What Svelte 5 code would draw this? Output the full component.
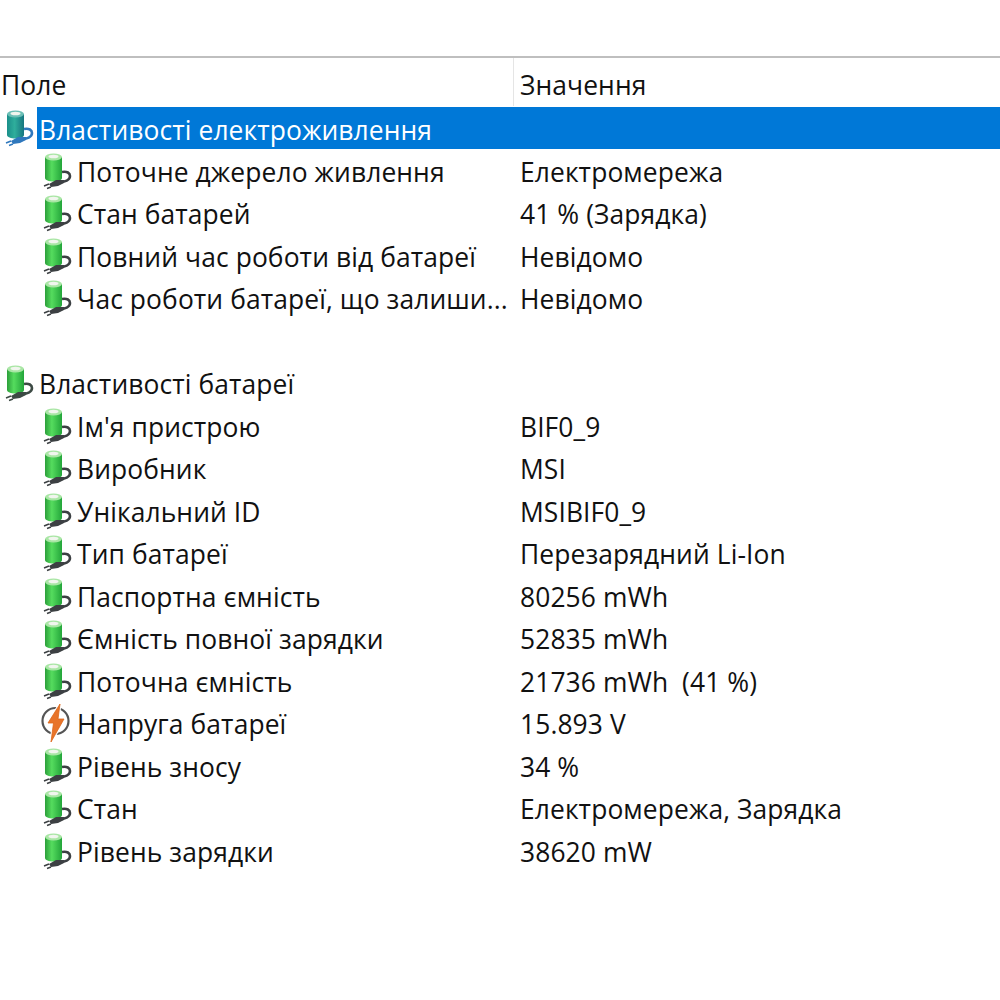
<script>
  const sections = [
    {
      title: 'Властивості електроживлення',
      selected: true,
      rows: [
        ['Поточне джерело живлення', 'Електромережа'],
        ['Стан батарей', '41 % (Зарядка)'],
        ['Повний час роботи від батареї', 'Невідомо'],
        ['Час роботи батареї, що залиши...', 'Невідомо']
      ]
    },
    {
      title: 'Властивості батареї',
      rows: [
        ["Ім'я пристрою", 'BIF0_9'],
        ['Виробник', 'MSI'],
        ['Унікальний ID', 'MSIBIF0_9'],
        ['Тип батареї', 'Перезарядний Li-Ion'],
        ['Паспортна ємність', '80256 mWh'],
        ['Ємність повної зарядки', '52835 mWh'],
        ['Поточна ємність', '21736 mWh  (41 %)'],
        ['Напруга батареї', '15.893 V', 'volt'],
        ['Рівень зносу', '34 %'],
        ['Стан', 'Електромережа, Зарядка'],
        ['Рівень зарядки', '38620 mW']
      ]
    }
  ];
</script>

<svg class="defs" width="0" height="0" aria-hidden="true">
  <defs>
    <linearGradient id="green" x1="0" x2="1" y1="0" y2="0">
      <stop offset="0" stop-color="#2c9f3a" />
      <stop offset="0.4" stop-color="#55dc5e" />
      <stop offset="1" stop-color="#23a53a" />
    </linearGradient>
    <linearGradient id="teal" x1="0" x2="1" y1="0" y2="0">
      <stop offset="0" stop-color="#1b8f8a" />
      <stop offset="0.45" stop-color="#2fae9c" />
      <stop offset="1" stop-color="#17757f" />
    </linearGradient>
  </defs>
</svg>

{#snippet battery(fill, top, cord)}
  <svg class="icon" viewBox="0 0 36 36">
    <path d="M21 20c5-1 8 1 8 4 0 4-5 6-11 6" fill="none" stroke={cord} stroke-width="2.600" />
    <path d="M4 5v21c0 2 4 3.500 8.500 3.500S21 28 21 26V5z" fill={fill} />
    <ellipse cx="12.500" cy="5" rx="8.500" ry="3.500" fill={top} />
    <ellipse cx="12.500" cy="4.500" rx="5" ry="1.800" fill="#f1f5ee" />
    <path d="M23 28l-8 0-7 4 2 3 7-1 6-3z" fill={cord} />
    <path d="M8 32l-5 2M10 35l-4 1.500" stroke={cord} stroke-width="1.500" />
  </svg>
{/snippet}

{#snippet bolt()}
  <svg class="icon" viewBox="0 0 36 36">
    <circle cx="14.500" cy="17" r="13" fill="#fff" stroke="#555" stroke-width="2.200" />
    <path d="M19 0L7 19h5.500L10 38l13-23h-6z" fill="#fff" stroke="#fff" stroke-width="3" />
    <path d="M19 0L7 19h5.500L10 38l13-23h-6z" fill="#e8742a" stroke="#dd6618" stroke-width="0.800" />
  </svg>
{/snippet}

<div class="list">
  <div class="head">
    <div class="col name">Поле</div>
    <div class="col value">Значення</div>
  </div>

  {#each sections as s}
    <div class="row top">
      <div class="cell">
        {@render battery(s.selected ? 'url(#teal)' : 'url(#green)', s.selected ? '#6cbfb6' : '#a9e6a5', s.selected ? '#2f78bd' : '#3c4a44')}
        <span class="label" class:selected={s.selected}>{s.title}</span>
      </div>
      {#if s.selected}<div class="fill"></div>{/if}
    </div>
    {#each s.rows as r}
      <div class="row">
        <div class="cell sub">
          {#if r[2] === 'volt'}
            {@render bolt()}
          {:else}
            {@render battery('url(#green)', '#a9e6a5', '#3c4043')}
          {/if}
          <span class="label">{r[0]}</span>
        </div>
        <div class="val">{r[1]}</div>
      </div>
    {/each}
    <div class="row"></div>
  {/each}
</div>

<style>
  :global(body) {
    background: #fff;
  }
  .defs {
    position: absolute;
  }
  .list {
    padding-top: 56px;
    font-family: "Open Sans", "Noto Sans", sans-serif;
    font-size: 26.4px;
    letter-spacing: 0.1px;
    color: #111;
    width: 1000px;
    height: 944px;
    overflow: hidden;
  }
  .head {
    display: flex;
    height: 48px;
    border-top: 2px solid #bfbfbf;
    box-sizing: content-box;
    margin-bottom: 1px;
  }
  .col {
    display: flex;
    align-items: center;
    padding-top: 6px;
    box-sizing: border-box;
  }
  .name {
    width: 514px;
    padding-left: 1px;
    border-right: 1px solid #e5e5e5;
  }
  .value {
    padding-left: 6px;
  }
  .row {
    display: flex;
    height: 42.5px;
    align-items: stretch;
  }
  .cell {
    width: 520px;
    padding-left: 3px;
    display: flex;
    align-items: center;
    box-sizing: border-box;
    white-space: pre;
  }
  .row.top .cell {
    width: auto;
    flex: none;
  }
  .cell.sub {
    padding-left: 41px;
  }
  .icon {
    width: 36px;
    height: 36px;
    flex: none;
    margin-right: -2px;
    margin-top: -2px;
    overflow: visible;
  }
  .label {
    line-height: 42px;
    padding: 1px 2px 0;
    height: 42px;
    box-sizing: border-box;
  }
  .label.selected {
    padding-top: 2px;
    background: #0078d7;
    color: #fff;
  }
  .fill {
    flex: 1;
    height: 42px;
    background: #0078d7;
  }
  .val {
    display: flex;
    align-items: center;
    white-space: pre;
    padding-top: 2px;
  }
</style>
